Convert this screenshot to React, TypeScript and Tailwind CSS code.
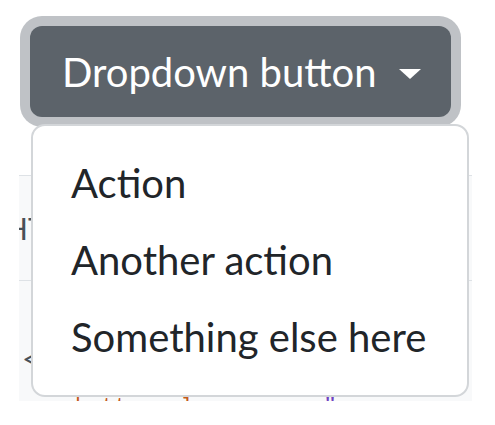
import React from "react";

const items = ["Action", "Another action", "Something else here"];

const App = () => {
  return (
    <div className="relative h-[425px] w-[495px] overflow-hidden bg-white font-['Lato',sans-serif]">
      <div className="pl-[30px] pt-[26px]">
        <button className="flex h-[91px] w-[421px] items-center rounded-[12px] bg-[#5c636a] pl-[32px] text-[40px] text-white ring-[10px] ring-[#bfc2c6]">
          <span className="leading-none">Dropdown button</span>
          <span className="ml-[22px] mt-[4px] inline-block border-x-[11px] border-t-[10px] border-x-transparent border-t-white" />
        </button>
      </div>

      <div className="mx-[19px] mt-[58px] h-[226px] w-[453px] overflow-hidden border-t border-[#dee2e6] bg-[#f8f9fa]">
        <div className="flex h-[105px] items-center border-b border-[#dee2e6]">
          <span className="-ml-[14px] text-[30px] text-[#495057]">HTML</span>
        </div>
        <div className="flex h-[92px] items-end">
          <span className="ml-[3px] text-[30px] leading-none text-[#495057]">&lt;</span>
        </div>
        <div className="mt-[24px] whitespace-nowrap pl-[56px] font-['Liberation_Mono',monospace] text-[22px] leading-none">
          <span className="text-[#c45b1c]">button class</span>
          <span className="ml-[90px] text-[#6f42c1]">"</span>
          <span className="ml-[150px] text-[#1a3ea8]">all btn-lg</span>
        </div>
      </div>

      <div className="absolute left-[31px] top-[124px] w-[438px] rounded-[14px] border-2 border-[#d3d6d9] bg-white py-[19px]">
        {items.map((item) => (
          <div key={item} className="h-[77px] pl-[38px] text-[40px] leading-[77px] text-[#212529]">
            {item}
          </div>
        ))}
      </div>
    </div>
  );
};

export default App;
